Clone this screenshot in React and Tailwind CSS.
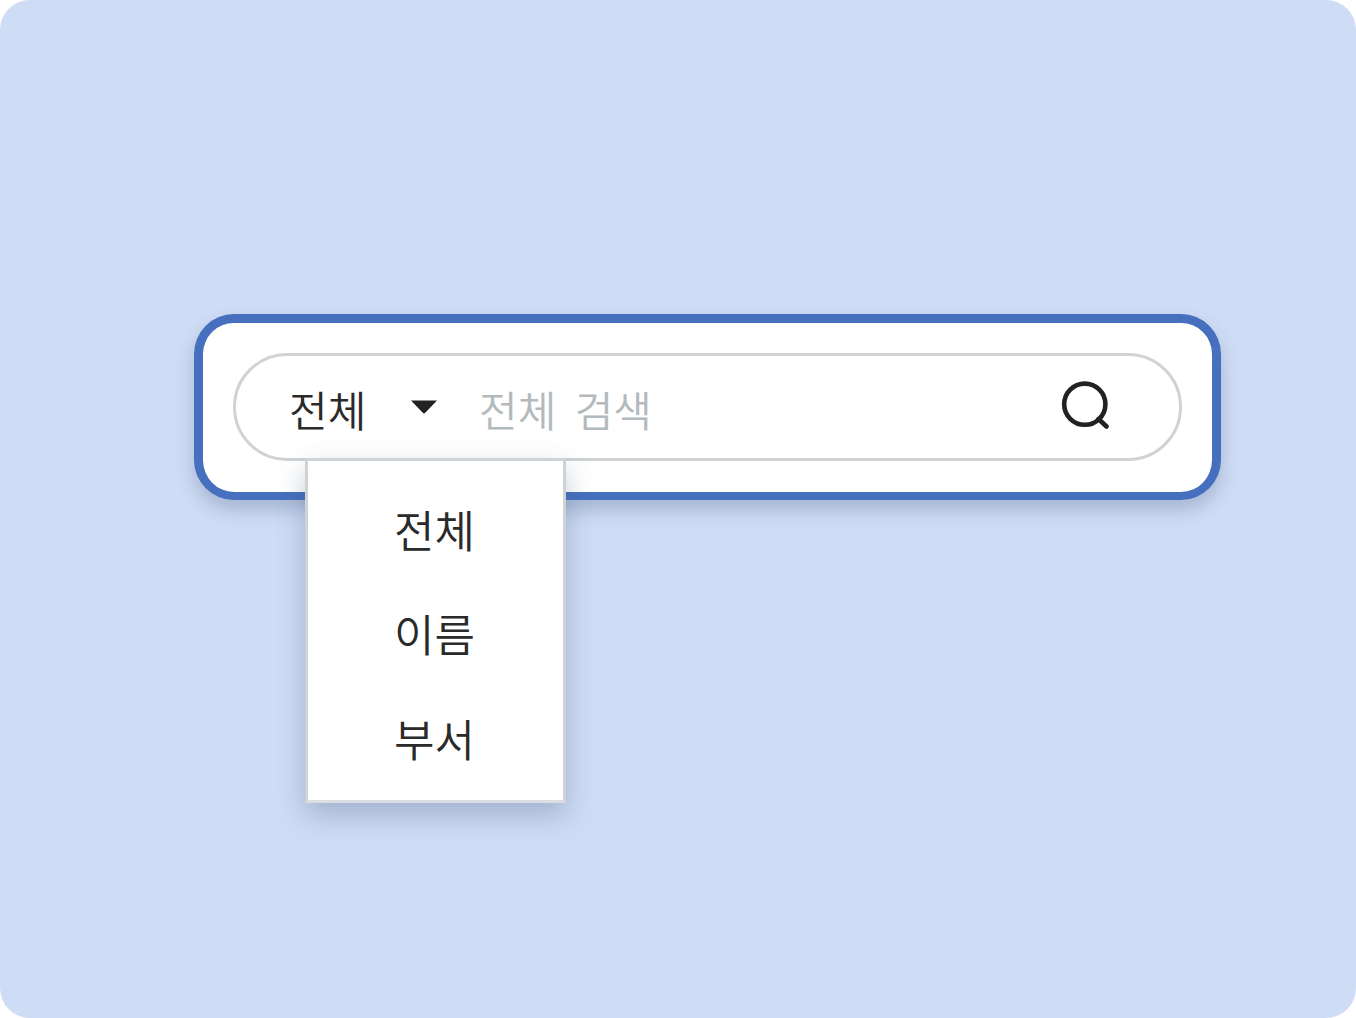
import React from "react";

export default function App() {
  return (
    <div className="w-[1356px] h-[1018px] bg-white overflow-hidden font-['Noto_Sans_CJK_KR','Noto_Sans',sans-serif]">
      <div className="w-full h-full rounded-[30px] bg-[#cfdcf5] pl-[194px] pt-[314px]">
        <div className="relative w-[1027px] h-[186px] rounded-[40px] border-[9px] border-b-8 border-[#4670bd] bg-white px-[30px] pt-[30px] shadow-[0_10px_18px_rgba(60,80,120,0.27)]">
          <div className="flex items-center w-[949px] h-[108px] rounded-[54px] border-[3px] border-[#cfd3d6] bg-white pl-[53px]">
            <span className="text-[42px] leading-[60px] font-[350] text-[#2a2a2a] w-[122px] mt-[4px]">전체</span>
            <svg width="28" height="14" viewBox="0 0 28 14" className="-ml-[1px] -mt-[1px]">
              <path d="M1 0.5H27L15 13a1.5 1.5 0 0 1-2 0Z" fill="#222222" />
            </svg>
            <span className="ml-[41px] text-[42px] leading-[60px] font-[350] [word-spacing:9px] text-[#b2babd] mt-[4px]">전체 검색</span>
            <svg width="48" height="48" viewBox="0 0 48 48" fill="none" className="ml-auto mr-[70px] -mt-[4px]">
              <circle cx="23.8" cy="23.2" r="20.6" stroke="#222222" strokeWidth="4.6" />
              <path d="M37.5 38L45.5 45.5" stroke="#222222" strokeWidth="4.6" strokeLinecap="round" />
            </svg>
          </div>
          <div className="absolute left-[102px] top-[135px] w-[261px] h-[345px] border-[3px] border-[#cfd3d6] border-b-[#dcdfe1] bg-white flex flex-col items-center pt-[38px] pr-[2px] shadow-[0_12px_26px_rgba(60,80,120,0.3)]">
            <div className="text-[44px] leading-[60px] font-[350] text-[#2a2a2a]">전체</div>
            <div className="text-[44px] leading-[60px] font-[350] text-[#2a2a2a] mt-[44px]">이름</div>
            <div className="text-[44px] leading-[60px] font-[350] text-[#2a2a2a] mt-[45px]">부서</div>
          </div>
        </div>
      </div>
    </div>
  );
}
